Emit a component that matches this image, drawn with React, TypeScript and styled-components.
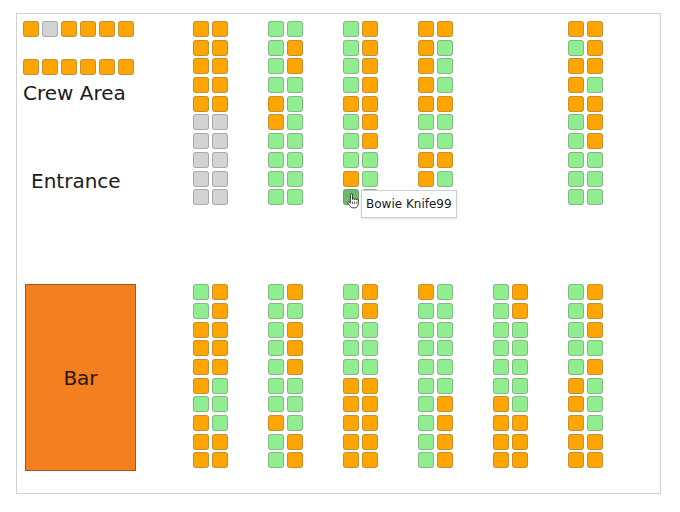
import styled, { createGlobalStyle } from "styled-components";

const GlobalStyle = createGlobalStyle`
  body {
    margin: 0;
    background: #ffffff;
    font-family: "DejaVu Sans", "Liberation Sans", sans-serif;
  }
`;

type SeatState = "O" | "G" | "X" | "H";

const seatColors: Record<SeatState, string> = {
  O: "#ffa500",
  G: "#90ee90",
  X: "#d3d3d3",
  H: "#6cba6c",
};

// top block, one array per column pair, "H" is the seat under the mouse
const topCols: string[][] = [
  ["OO", "OO", "OO", "OO", "OO", "XX", "XX", "XX", "XX", "XX"],
  ["GG", "GO", "GO", "GG", "OG", "OG", "GG", "GG", "GG", "GG"],
  ["GO", "GO", "GO", "GO", "OO", "GO", "GO", "GG", "OG", "HG"],
  ["OO", "OG", "OG", "OG", "OO", "GG", "GG", "OO", "OG"],
  [],
  ["OO", "GO", "OO", "OG", "OO", "GO", "GO", "GG", "GG", "GG"],
];

const bottomCols: string[][] = [
  ["GO", "GO", "OO", "OO", "OO", "OG", "GG", "OG", "OO", "OO"],
  ["GO", "GG", "GO", "GO", "GO", "GG", "GG", "OG", "GO", "GO"],
  ["GO", "GO", "GG", "GG", "GG", "OO", "OO", "OO", "OO", "OO"],
  ["OG", "GG", "GG", "GG", "GG", "GG", "GO", "GO", "GO", "GO"],
  ["GO", "GO", "GG", "GG", "GG", "GG", "OG", "OO", "OO", "OO"],
  ["GO", "GO", "GO", "GG", "GO", "OG", "OG", "OG", "OO", "OO"],
];

const crewRows = ["OXOOOO", "OOOOOO"];

const Frame = styled.div`
  box-sizing: border-box;
  margin: 13px 0 0 16px;
  width: 645px;
  height: 481px;
  border: 1px solid #d2d2d2;
  padding: 7px 0 0 6px;
  display: grid;
  grid-template-columns: 130px repeat(6, 35px);
  grid-template-rows: auto auto;
  align-content: start;
  column-gap: 40px;
  row-gap: 79px;
  align-items: start;
`;

const SidePanel = styled.div`
  display: flex;
  flex-direction: column;
  align-items: flex-start;
`;

const CrewRow = styled.div<{ $offset?: number }>`
  display: flex;
  gap: 3px;
  margin-top: ${(p) => p.$offset ?? 0}px;
`;

const Label = styled.div<{ $top: number; $left: number }>`
  font-size: 20px;
  line-height: 20px;
  color: #1a1a1a;
  margin-top: ${(p) => p.$top}px;
  margin-left: ${(p) => p.$left}px;
  white-space: nowrap;
`;

const Bar = styled.div`
  box-sizing: border-box;
  margin-left: 2px;
  width: 111px;
  height: 187px;
  background: #f47f20;
  border: 1px solid #9c5a22;
  display: flex;
  align-items: center;
  justify-content: center;
  font-size: 20px;
  color: #2b1606;
`;

const Column = styled.div`
  display: flex;
  flex-direction: column;
  gap: 2.7px;
`;

const PairRow = styled.div`
  display: flex;
  gap: 3px;
`;

const SeatBox = styled.div<{ $state: SeatState }>`
  position: relative;
  box-sizing: border-box;
  width: 16px;
  height: 16px;
  border-radius: 3px;
  background: ${(p) => seatColors[p.$state]};
  border: 1px solid rgba(115, 115, 115, 0.42);
`;

const Tooltip = styled.div`
  position: absolute;
  left: 17px;
  top: 0px;
  z-index: 2;
  box-sizing: border-box;
  height: 28px;
  padding: 0 4px;
  display: flex;
  align-items: center;
  background: #ffffff;
  border: 1px solid #cfcfcf;
  box-shadow: 0 1px 2px rgba(0, 0, 0, 0.12);
  font-size: 12px;
  color: #1a1a1a;
  white-space: nowrap;
`;

const Cursor = styled.svg`
  position: absolute;
  left: 3px;
  top: 3px;
  z-index: 3;
`;

function HandCursor() {
  return (
    <Cursor width="12" height="16" viewBox="0 0 14 18">
      <path
        d="M4 1.6a1.2 1.2 0 0 1 2.4 0V7.2a1.1 1.1 0 0 1 2.2 .2a1.1 1.1 0 0 1 2.2 .4a1.1 1.1 0 0 1 2.2 .6V12c0 3-1.5 5-4 5H7.2c-2 0-3-1-4-2.5L.9 11.2a1.1 1.1 0 0 1 1.8-1.2L4 11.6Z"
        fill="#ffffff"
        stroke="#111111"
        strokeWidth="0.9"
        strokeLinejoin="round"
      />
      <path d="M6.4 9.5v3M8.6 9.5v3M10.8 9.8v2.7" stroke="#111111" strokeWidth="0.7" />
    </Cursor>
  );
}

function Seat({ state }: { state: SeatState }) {
  return (
    <SeatBox $state={state}>
      {state === "H" && (
        <>
          <HandCursor />
          <Tooltip>Bowie Knife99</Tooltip>
        </>
      )}
    </SeatBox>
  );
}

function SeatColumn({ rows }: { rows: string[] }) {
  return (
    <Column>
      {rows.map((pair, i) => (
        <PairRow key={i}>
          <Seat state={pair[0] as SeatState} />
          <Seat state={pair[1] as SeatState} />
        </PairRow>
      ))}
    </Column>
  );
}

export default function App() {
  return (
    <>
      <GlobalStyle />
      <Frame>
        <SidePanel>
          {crewRows.map((row, i) => (
            <CrewRow key={i} $offset={i === 0 ? 0 : 22}>
              {row.split("").map((s, j) => (
                <Seat key={j} state={s as SeatState} />
              ))}
            </CrewRow>
          ))}
          <Label $top={8} $left={0}>Crew Area</Label>
          <Label $top={68} $left={8}>Entrance</Label>
        </SidePanel>
        {topCols.map((rows, i) => (
          <SeatColumn key={`t${i}`} rows={rows} />
        ))}
        <Bar>Bar</Bar>
        {bottomCols.map((rows, i) => (
          <SeatColumn key={`b${i}`} rows={rows} />
        ))}
      </Frame>
    </>
  );
}
